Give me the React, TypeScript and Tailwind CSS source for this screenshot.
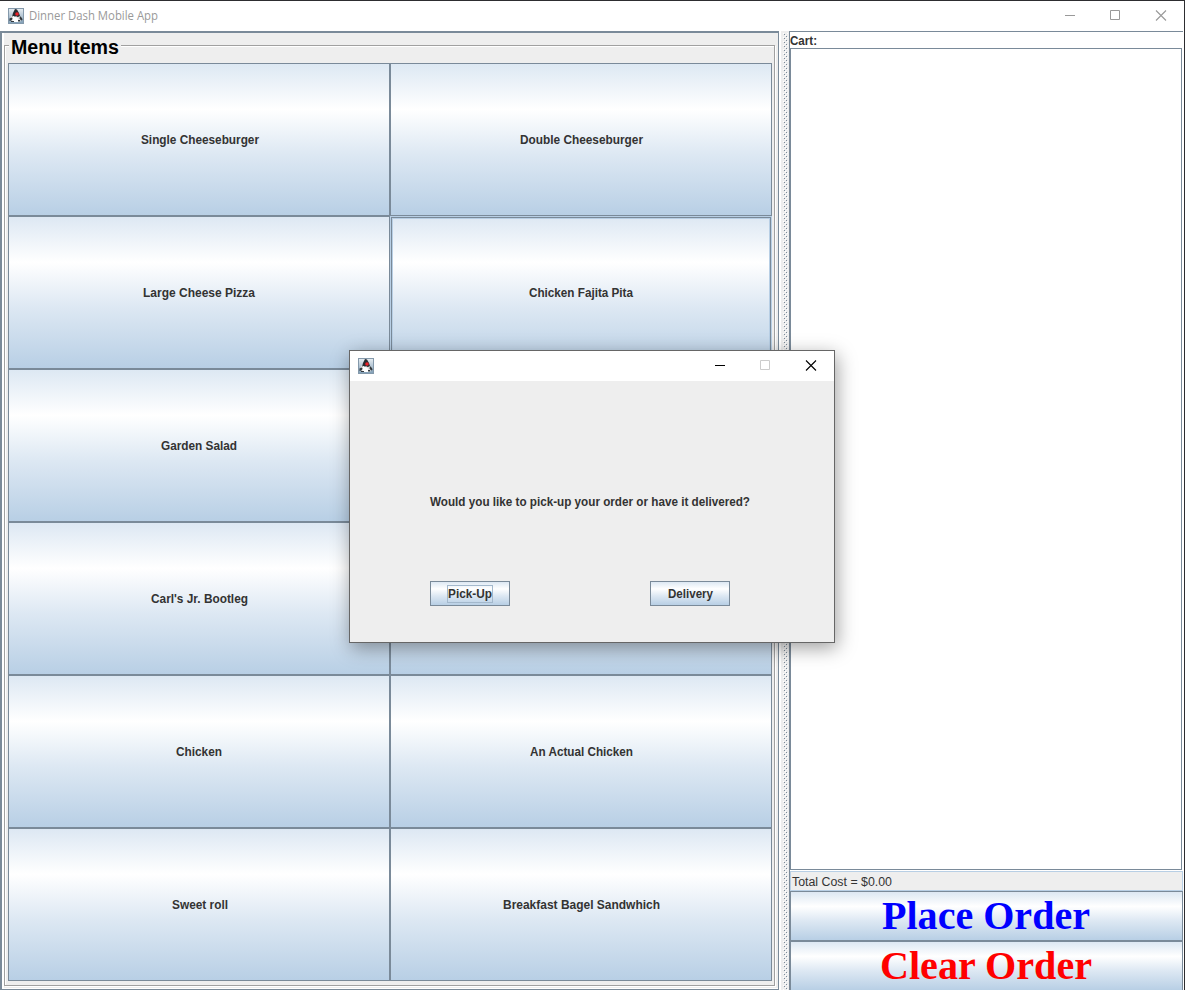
import type { ReactNode } from 'react';

const grad = 'bg-[linear-gradient(to_bottom,#dde8f3_0%,#ffffff_30%,#dde8f3_60%,#b8cfe5_100%)]';

function Text({ x, w, size, weight = 700, fill = '#333333', family = 'Liberation Sans', h = 16, base = 12 }: { x: string; w: number; size: number; weight?: number; fill?: string; family?: string; h?: number; base?: number }) {
  return (
    <svg width={w} height={h} className="block shrink-0 overflow-visible">
      <text x="0" y={base} textLength={w} lengthAdjust="spacingAndGlyphs" fontFamily={`"${family}", sans-serif`} fontSize={size} fontWeight={weight} fill={fill}>{x}</text>
    </svg>
  );
}

function Duke() {
  return (
    <svg width="16" height="16" viewBox="0 0 16 16" className="shrink-0">
      <defs>
        <linearGradient id="duke" x1="0" y1="0" x2="0" y2="1">
          <stop offset="0" stopColor="#e8eef3" />
          <stop offset="1" stopColor="#7f9db5" />
        </linearGradient>
      </defs>
      <rect x=".5" y=".5" width="15" height="15" fill="url(#duke)" stroke="#8499ab" />
      <path d="M3 8l3-1h5l3 3-1 2-1 2H4l-2-2z" fill="#dedede" />
      <path d="M7 1l2 .5 2 3.500 1 3-2 1-4-1-2 1 1-4z" fill="#292c30" />
      <path d="M4.500 8l2 .5 3 1.500 1.500 4H4l1-3z" fill="#ffffff" />
      <path d="M1.500 10.500l2-1 1 1-1 2-2 .5zM12 8l2 2 .5 2-1.500 .5-1.500-2zM3 13h3v1H3zM10 12h2v1.500h-2z" fill="#33383c" />
      <path d="M6 8h3v1H6z" fill="#93999d" />
      <circle cx="9" cy="6" r="1.800" fill="#ed2028" />
    </svg>
  );
}

function Controls({ min, max, close }: { min: string; max: string; close: string }) {
  return (
    <svg width="102" height="12" viewBox="0 0 102 12" fill="none" className="shrink-0">
      <path d="M0 5.5h10" stroke={min} />
      <path d="M45.5.5h9v9h-9z" stroke={max} />
      <path d="M91 .5l10 10M101 .5l-10 10" stroke={close} strokeWidth="1.1" />
    </svg>
  );
}

const items = [
  { name: 'Single Cheeseburger', w: 118, nudge: true },
  { name: 'Double Cheeseburger', w: 123 },
  { name: 'Large Cheese Pizza', w: 112 },
  { name: 'Chicken Fajita Pita', w: 104, hot: true },
  { name: 'Garden Salad', w: 76 },
  { name: '', w: 0 },
  { name: "Carl's Jr. Bootleg", w: 97 },
  { name: '', w: 0 },
  { name: 'Chicken', w: 46 },
  { name: 'An Actual Chicken', w: 103 },
  { name: 'Sweet roll', w: 56, nudge: true },
  { name: 'Breakfast Bagel Sandwhich', w: 157 },
];

function MetalButton({ children, className = '', border = 'border-[#7a8a99]' }: { children: ReactNode; className?: string; border?: string }) {
  return <button className={`flex items-center justify-center border ${border} ${grad} ${className}`}>{children}</button>;
}

export default function App() {
  return (
    <div className="relative flex h-[990px] w-[1185px] flex-col overflow-hidden border-t border-r border-[#2d2d30] bg-white">
      <header className="flex h-[30px] shrink-0 items-center bg-white pl-2">
        <Duke />
        <div className="ml-[5px]"><Text x="Dinner Dash Mobile App" w={129} size={12} weight={400} fill="#999999" family="Open Sans" /></div>
        <div className="ml-auto mr-[17px]"><Controls min="#999999" max="#999999" close="#999999" /></div>
      </header>
      <div className="flex h-[959px]">
        <main className="h-full w-[779px] shrink-0 border-2 border-r border-b border-[#7a8a99] bg-[#eeeeee]">
          <div className="relative h-full border-l-2 border-b border-white">
            <fieldset className="absolute top-3 right-[3px] bottom-[2px] left-0 border border-[#a0a0a0] shadow-[1px_1px_0_#fff,inset_1px_1px_0_#fff]" />
            <h1 className="absolute top-[1px] left-[5px] bg-[#eeeeee] pr-[2px] pl-[2px]"><Text x="Menu Items" w={108} size={20} fill="#000000" h={24} base={20} /></h1>
            <div className="absolute top-[30px] left-1 grid h-[918px] w-[764px] grid-cols-2 grid-rows-6">
              {items.map((item, i) => (
                <MetalButton
                  key={i}
                  border={item.hot ? 'border-[#b8cfe5]' : 'border-[#7a8a99]'}
                  className={`${item.hot ? 'shadow-[inset_0_0_0_1px_#7a8a99,inset_0_0_0_2px_#b8cfe5]' : ''} ${item.nudge ? 'pl-[2px]' : ''}`}
                >
                  {item.name && <Text x={item.name} w={item.w} size={12} />}
                </MetalButton>
              ))}
            </div>
          </div>
        </main>
        <div className="flex w-[10px] shrink-0 border-l-2 border-white bg-[#eeeeee]">
          <svg width="8" height="959">
            <defs>
              <pattern id="bumps" width="4" height="4" patternUnits="userSpaceOnUse">
                <path d="M0 0h1v1H0zM2 2h1v1H2z" fill="#ffffff" />
                <path d="M1 1h1v1H1zM3 3h1v1H3z" fill="#7a8a99" />
              </pattern>
            </defs>
            <rect x="2" y="2" width="5" height="957" fill="url(#bumps)" shapeRendering="crispEdges" />
          </svg>
        </div>
        <aside className="flex w-[394px] shrink-0 flex-col border-t border-l border-[#7a8a99]">
          <div className="h-4 shrink-0"><Text x="Cart:" w={27} size={12} base={13} /></div>
          <div className="mr-px h-[822px] shrink-0 border border-[#7a8a99] bg-white" />
          <div className="mt-px h-5 shrink-0 border border-[#b8cfe5] bg-[#eeeeee] pl-px"><Text x="Total Cost = $0.00" w={100} size={12} weight={400} base={14} /></div>
          <MetalButton className="h-[50px] shrink-0 pr-[1px]"><Text x="Place Order" w={208} size={40} fill="#0000ff" family="Liberation Serif" h={46} base={36} /></MetalButton>
          <MetalButton className="h-[50px] shrink-0 pr-[1px]"><Text x="Clear Order" w={212} size={40} fill="#ff0000" family="Liberation Serif" h={46} base={36} /></MetalButton>
        </aside>
      </div>
      <section className="absolute top-[349px] left-[349px] flex h-[293px] w-[486px] flex-col border border-[#666666] bg-[#eeeeee] shadow-[2px_5px_18px_rgba(0,0,0,0.38)]">
        <div className="flex h-[30px] shrink-0 items-center bg-white pl-2">
          <Duke />
          <div className="ml-auto mr-[17px]"><Controls min="#000000" max="#cccccc" close="#000000" /></div>
        </div>
        <div className="mt-[113px] ml-20"><Text x="Would you like to pick-up your order or have it delivered?" w={320} size={12} /></div>
        <div className="mt-[71px] ml-20 flex gap-[140px]">
          <MetalButton className="h-[25px] w-20"><span className="flex h-[18px] w-[46px] items-center justify-center border border-[#a3b8cc]"><Text x="Pick-Up" w={44} size={12} /></span></MetalButton>
          <MetalButton className="h-[25px] w-20"><Text x="Delivery" w={45} size={12} /></MetalButton>
        </div>
      </section>
    </div>
  );
}
